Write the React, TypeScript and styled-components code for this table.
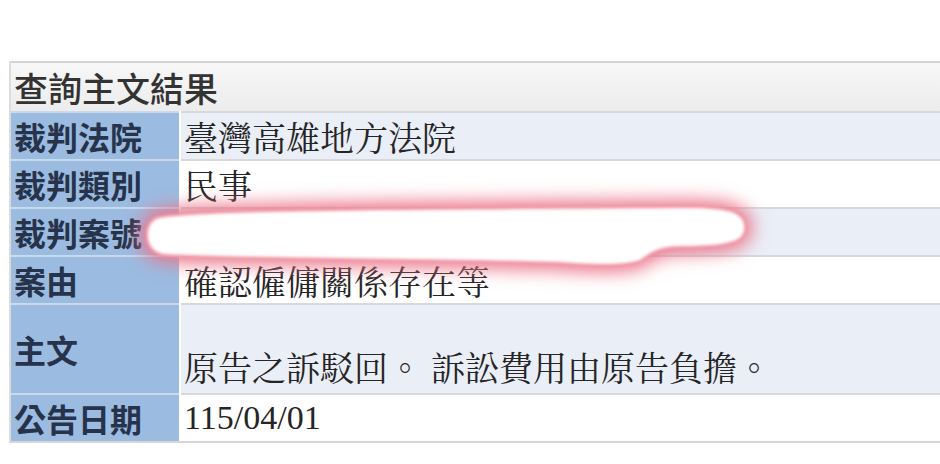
import React from "react";
import styled, { createGlobalStyle } from "styled-components";

const Global = createGlobalStyle`
  html, body { margin: 0; padding: 0; background: #fff; overflow: hidden; }
  body { width: 940px; height: 464px; }
`;

const Page = styled.div`
  position: relative;
  padding: 61px 0 0 9px;
  width: 940px;
  height: 464px;
  box-sizing: border-box;
  overflow: hidden;
`;

const Table = styled.div`
  width: 960px;
  display: flex;
  flex-direction: column;
  border-left: 2px solid #dcdcdc;
  border-bottom: 2px solid #d6d6d6;
`;

const Caption = styled.div`
  height: 50px;
  display: flex;
  align-items: center;
  padding-left: 3px;
  border-top: 2px solid #d4d4d4;
  background: linear-gradient(#f7f7f7, #ececec);
  font-family: "Noto Sans CJK TC", sans-serif;
  font-size: 34px;
  font-weight: 500;
  color: #333;
  box-sizing: border-box;
`;

const Row = styled.div<{ $h: number }>`
  display: flex;
  height: ${(p) => p.$h}px;
  column-gap: 2px;
  background: #fff;
`;

const Label = styled.div`
  width: 168px;
  flex: none;
  display: flex;
  align-items: center;
  padding-left: 3px;
  box-sizing: border-box;
  background: #9bbbe1;
  border-top: 2px solid #c9daee;
  font-family: "Noto Sans CJK TC", sans-serif;
  font-weight: 700;
  font-size: 32px;
  color: #26334a;
`;

const Value = styled.div<{ $alt: boolean; $bottom?: boolean }>`
  flex: 1;
  display: flex;
  align-items: ${(p) => (p.$bottom ? "flex-end" : "center")};
  padding: ${(p) => (p.$bottom ? "0 0 2px 3px" : "0 0 0 3px")};
  box-sizing: border-box;
  background: ${(p) => (p.$alt ? "#eaeef7" : "#ffffff")};
  border-top: 2px solid #d8d9dc;
  font-family: "Liberation Serif", "Noto Serif CJK TC", "Noto Sans CJK TC", serif;
  font-size: 34px;
  color: #252525;
  white-space: nowrap;
`;

const Gap = styled.span`
  display: inline-block;
  width: 9px;
`;

const Redact = styled.svg`
  position: absolute;
  left: 120px;
  top: 180px;
  width: 660px;
  height: 110px;
  overflow: visible;
`;

const rows: { label: string; value: React.ReactNode; h: number; bottom?: boolean }[] = [
  { label: "裁判法院", value: "臺灣高雄地方法院", h: 48 },
  { label: "裁判類別", value: "民事", h: 48 },
  { label: "裁判案號", value: "", h: 48 },
  { label: "案由", value: "確認僱傭關係存在等", h: 48 },
  {
    label: "主文",
    value: (
      <>
        原告之訴駁回。<Gap />訴訟費用由原告負擔。
      </>
    ),
    h: 90,
    bottom: true,
  },
  { label: "公告日期", value: "115/04/01", h: 48 },
];

const shape =
  "M 40 38 C 90 30, 300 30, 560 28 C 600 28, 622 30, 624 45 C 626 62, 610 65, 560 66 C 540 66, 530 72, 520 80 C 500 86, 470 84, 440 82 C 300 78, 120 78, 45 74 C 22 72, 24 40, 40 38 Z";

export default function App() {
  return (
    <>
      <Global />
      <Page>
        <Table>
          <Caption>查詢主文結果</Caption>
          {rows.map((r, i) => (
            <Row key={r.label} $h={r.h}>
              <Label>{r.label}</Label>
              <Value $alt={i % 2 === 0} $bottom={r.bottom}>
                {r.value}
              </Value>
            </Row>
          ))}
        </Table>
        <Redact viewBox="0 0 660 110">
          <defs>
            <filter id="glow" x="-20%" y="-60%" width="140%" height="220%">
              <feGaussianBlur stdDeviation="9" />
            </filter>
            <filter id="soft" x="-5%" y="-20%" width="110%" height="140%">
              <feGaussianBlur stdDeviation="1.5" />
            </filter>
          </defs>
          <path d={shape} fill="#eb7388" stroke="#eb7388" strokeWidth="16" filter="url(#glow)" />
          <path d={shape} fill="#f19aa8" stroke="#f19aa8" strokeWidth="5" filter="url(#soft)" />
          <path d={shape} fill="#ffffff" filter="url(#soft)" />
        </Redact>
      </Page>
    </>
  );
}
